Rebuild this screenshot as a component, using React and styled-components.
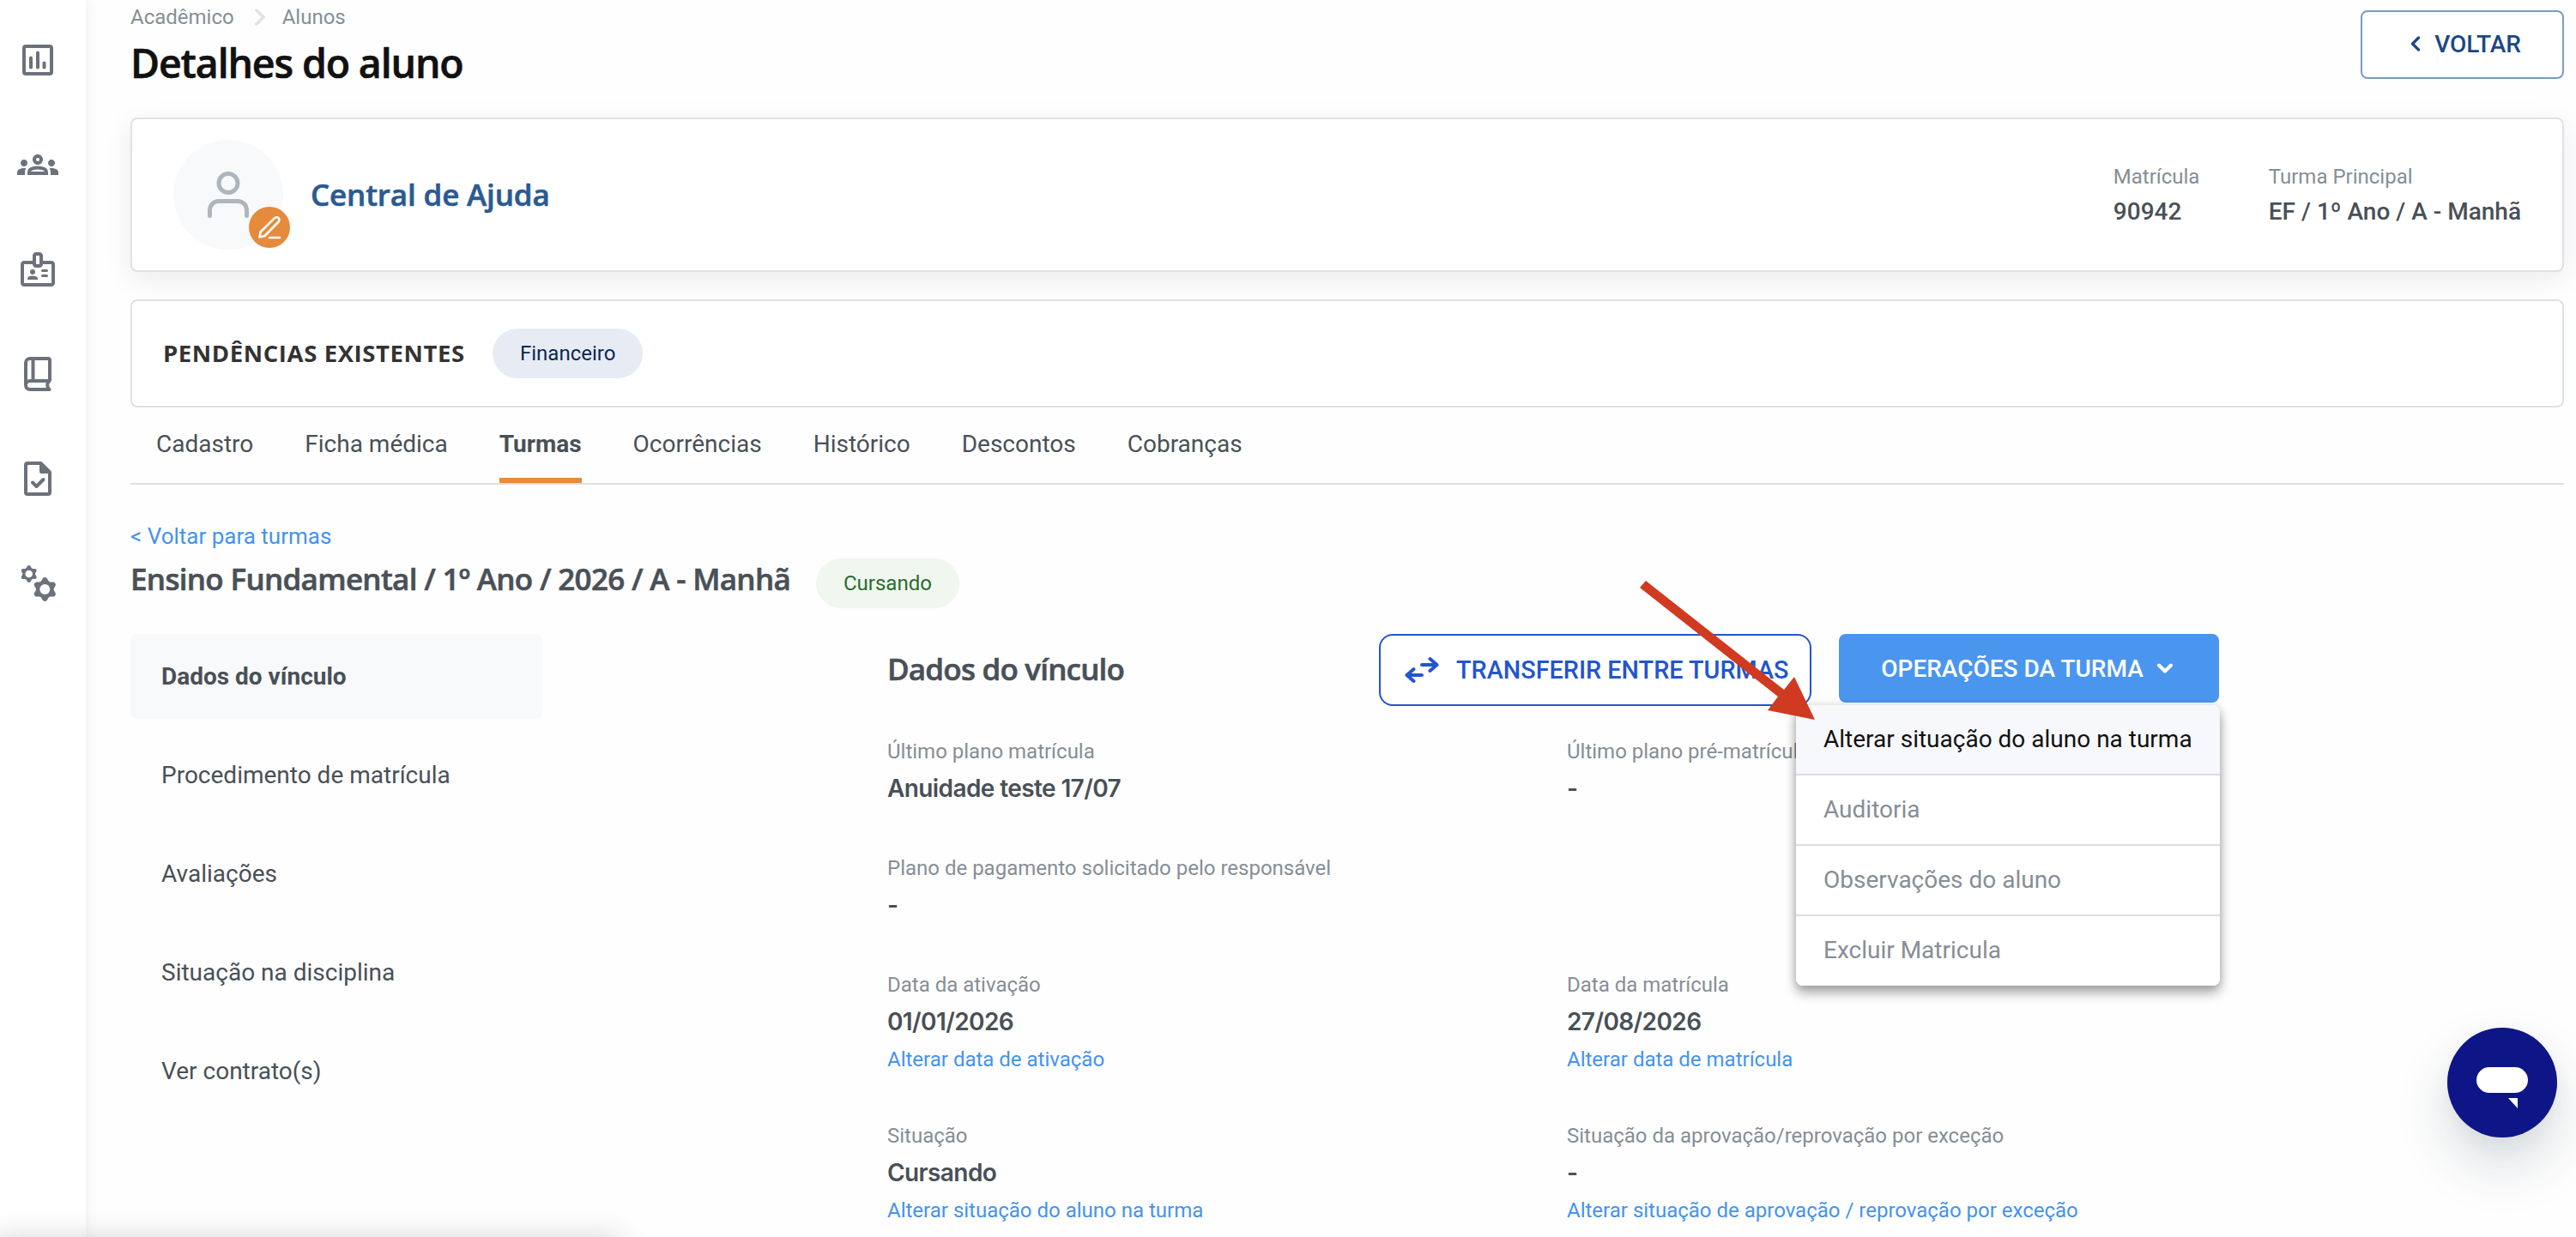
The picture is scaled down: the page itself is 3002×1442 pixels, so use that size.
import React from "react";
import styled, { createGlobalStyle, css } from "styled-components";

const Global = createGlobalStyle`
  *, *::before, *::after { box-sizing: border-box; }
  body { margin: 0; background: #fefefe; }
  body, button { font-family: Roboto, "Liberation Sans", sans-serif; }
  h1, h2, h3, p, ul, dl, dd { margin: 0; padding: 0; }
`;

const headingFont = css`
  font-family: "Open Sans", "Noto Sans", sans-serif;
  font-weight: 600;
  -webkit-text-stroke: 0.6px currentColor;
`;

const Page = styled.div`
  position: relative;
  display: flex;
  width: 3002px;
  height: 1442px;
  overflow: hidden;
  background: #fefefe;
`;

const Sidebar = styled.nav`
  display: flex;
  flex-direction: column;
  align-items: center;
  gap: 74px;
  flex: none;
  width: 100px;
  padding: 46px 12px 0 0;
  background: #fff;
  color: #6c727b;
  box-shadow: 0 0 14px rgba(0, 0, 0, 0.075);
`;

const SideIcon = styled.svg`
  display: block;
  flex: none;
  width: 48px;
  height: 48px;
`;

const Main = styled.main`
  display: flex;
  flex-direction: column;
  flex: none;
  width: 2888px;
  padding-left: 52px;
`;

const Header = styled.header`
  display: flex;
  justify-content: space-between;
  align-items: flex-start;
  height: 137px;
`;

const Breadcrumb = styled.div`
  display: flex;
  align-items: center;
  padding-top: 4px;
  font-size: 24px;
  line-height: 32px;
  color: #868e96;
`;

const Separator = styled.svg`
  width: 12px;
  height: 20px;
  margin: 0 20px 0 24px;
`;

const Title = styled.h1`
  ${headingFont}
  margin-top: 5px;
  font-size: 46.5px;
  line-height: 64px;
  letter-spacing: ${(p) => p.$track};
  color: #111;
`;

const BackButton = styled.button`
  display: flex;
  align-items: center;
  justify-content: flex-end;
  gap: 16px;
  width: 237px;
  height: 80px;
  margin-top: 12px;
  padding: 0 48px 2px 0;
  border: 2px solid #7c9bc1;
  border-radius: 8px;
  background: #fff;
  color: #1b4788;
  font-size: 28px;
  font-weight: 500;
`;

const Card = styled.section`
  display: flex;
  align-items: center;
  border: 2px solid #dee2e6;
  border-radius: 8px;
  background: #fff;
`;

const StudentCard = styled(Card)`
  height: 180px;
  padding: 0 48px 0 48px;
  box-shadow: 0 8px 32px rgba(0, 0, 0, 0.08);
`;

const Avatar = styled.div`
  position: relative;
  display: flex;
  align-items: center;
  justify-content: center;
  width: 128px;
  height: 128px;
  border-radius: 50%;
  background: #f8f9fb;
`;

const EditBadge = styled.span`
  position: absolute;
  right: -8px;
  bottom: 2px;
  display: flex;
  align-items: center;
  justify-content: center;
  width: 48px;
  height: 48px;
  border-radius: 50%;
  background: #e58b3b;
`;

const StudentName = styled.h2`
  ${headingFont}
  flex: 1;
  margin-left: 32px;
  font-size: 35px;
  line-height: 50px;
  letter-spacing: ${(p) => p.$track};
  color: #2a5a92;
`;

const Info = styled.div`
  width: ${(p) => p.$width};
  padding-top: 2px;
  white-space: nowrap;
`;

const Label = styled.div`
  font-size: 24px;
  line-height: 28px;
  color: #868e96;
`;

const InfoValue = styled.div`
  margin-top: 9px;
  font-size: 28px;
  font-weight: 500;
  line-height: 36px;
  color: #495057;
`;

const Value = styled.div`
  margin-top: 11px;
  font-family: Inter, Roboto, sans-serif;
  font-size: 28px;
  font-weight: 560;
  line-height: 36px;
  letter-spacing: -0.6px;
  color: #495057;
`;

const PendingCard = styled(Card)`
  height: 126px;
  margin-top: 32px;
  padding-left: 36px;
`;

const PendingTitle = styled.h3`
  ${headingFont}
  width: 384px;
  font-size: 27.5px;
  font-weight: 700;
  -webkit-text-stroke: 0;
  line-height: 40px;
  letter-spacing: ${(p) => p.$track};
  color: #333;
  white-space: nowrap;
`;

const Pill = styled.span`
  display: flex;
  align-items: center;
  height: 58px;
  padding: 0 32px 1px;
  border-radius: 29px;
  font-size: 24px;
  background: ${(p) => (p.$tone === "green" ? "#eff7ee" : "#e7ecf4")};
  color: ${(p) => (p.$tone === "green" ? "#2c6a2f" : "#0c2756")};
`;

const Tabs = styled.div`
  display: flex;
  gap: 60px;
  height: 90px;
  padding: 27px 0 0 30px;
  border-bottom: 2px solid #dee0e4;
`;

const Tab = styled.div`
  height: 61px;
  border-bottom: 6px solid ${(p) => (p.$active ? "#e58b3b" : "transparent")};
  font-size: 28px;
  font-weight: ${(p) => (p.$active ? 700 : 400)};
  line-height: 32px;
  color: #495057;
`;

const Link = styled.div`
  margin-top: ${(p) => p.$gap};
  font-size: ${(p) => p.$size || "24px"};
  line-height: ${(p) => p.$line || "28px"};
  color: #4593ee;
  white-space: nowrap;
`;

const ClassRow = styled.div`
  display: flex;
  align-items: center;
  height: 58px;
  margin-top: 10px;
`;

const SectionTitle = styled.h2`
  ${headingFont}
  width: ${(p) => p.$width};
  padding-bottom: ${(p) => p.$lift};
  font-size: 35px;
  line-height: 50px;
  letter-spacing: ${(p) => p.$track};
  color: #495057;
  white-space: nowrap;
`;

const Body = styled.div`
  display: flex;
  gap: 402px;
  margin-top: 30px;
`;

const SideMenu = styled.div`
  display: flex;
  flex-direction: column;
  gap: 16px;
  width: 480px;
`;

const SideMenuItem = styled.div`
  display: flex;
  align-items: center;
  height: 99px;
  padding: 0 36px 1px;
  border-radius: 8px;
  font-size: 28px;
  font-weight: ${(p) => (p.$active ? 700 : 400)};
  background: ${(p) => (p.$active ? "#f8f9fb" : "transparent")};
  color: #495057;
`;

const Content = styled.section`
  width: 1552px;
`;

const ContentHeader = styled.div`
  display: flex;
  align-items: center;
  height: 84px;
`;

const TransferButton = styled.button`
  display: flex;
  align-items: center;
  gap: 20px;
  width: 504px;
  height: 84px;
  padding: 0 0 1px 28px;
  border: 2px solid #2255cf;
  border-radius: 16px;
  background: #fff;
  color: #2255cf;
  font-size: 28.8px;
  font-weight: 500;
  white-space: nowrap;
`;

const Dropdown = styled.div`
  position: relative;
  align-self: flex-start;
  margin-left: 32px;
`;

const OperationsButton = styled.button`
  display: flex;
  align-items: center;
  justify-content: center;
  gap: 15px;
  width: 443px;
  height: 80px;
  padding: 0 4px 0 0;
  border: 0;
  border-radius: 8px;
  background: #4a96ef;
  color: #fff;
  font-size: 28px;
  font-weight: 500;
  white-space: nowrap;
`;

const Menu = styled.div`
  position: absolute;
  z-index: 2;
  top: 83px;
  right: -1px;
  width: 494px;
  border-radius: 8px;
  background: #fff;
  box-shadow: 0 8px 14px rgba(0, 0, 0, 0.36), 0 0 8px rgba(0, 0, 0, 0.12);
`;

const MenuItem = styled.div`
  display: flex;
  align-items: center;
  height: ${(p) => (p.$last ? "81px" : "82px")};
  padding: 0 32px 2px;
  border-bottom: ${(p) => (p.$last ? "0" : "2px solid #dcdddf")};
  border-radius: ${(p) => (p.$active ? "8px 8px 0 0" : p.$last ? "0 0 8px 8px" : "0")};
  font-size: 28px;
  background: ${(p) => (p.$active ? "#f7f8fb" : "#fff")};
  color: ${(p) => (p.$active ? "#111" : "#868e96")};
  white-space: nowrap;
`;

const Fields = styled.div`
  display: grid;
  grid-template-columns: 792px 1fr;
  grid-template-rows: 136px 136px 176px 132px;
  margin-top: 39px;
`;

const Field = styled.div`
  grid-column: ${(p) => p.$col};
  white-space: nowrap;
`;

const Pointer = styled.svg`
  position: absolute;
  z-index: 5;
  left: 1905px;
  top: 670px;
  width: 215px;
  height: 175px;
`;

const Chat = styled.div`
  position: absolute;
  z-index: 4;
  left: 2852px;
  top: 1198px;
  display: flex;
  width: 128px;
  height: 128px;
  border-radius: 50%;
  background: #0e1586;
  box-shadow: 0 32px 64px rgba(20, 50, 60, 0.16), 0 8px 24px rgba(20, 50, 60, 0.05);
`;

const StatusShade = styled.div`
  position: absolute;
  left: -10px;
  bottom: -44px;
  width: 734px;
  height: 40px;
  border-radius: 8px;
  box-shadow: 0 0 36px rgba(0, 0, 0, 0.2);
`;

const stroke = {
  fill: "none",
  stroke: "currentColor",
  strokeLinecap: "round",
  strokeLinejoin: "round",
};

function ReportIcon() {
  return (
    <SideIcon viewBox="0 0 48 48">
      <rect x="8" y="8" width="32" height="32" rx="2" {...stroke} strokeWidth="4" />
      <path d="M16 21.5v11M24 15.5v17M31.5 27.5v5" {...stroke} strokeWidth="4" />
    </SideIcon>
  );
}

function GroupsIcon() {
  return (
    <SideIcon viewBox="0 0 24 24" fill="currentColor">
      <path d="M4 13c1.1 0 2-.9 2-2s-.9-2-2-2-2 .9-2 2 .9 2 2 2zm1.13 1.1c-.37-.06-.74-.1-1.13-.1-.99 0-1.93.21-2.78.58A2.01 2.01 0 0 0 0 16.43V18h4.5v-1.61c0-.83.23-1.61.63-2.29zM20 13c1.1 0 2-.9 2-2s-.9-2-2-2-2 .9-2 2 .9 2 2 2zm4 3.43c0-.81-.48-1.53-1.22-1.85A6.95 6.95 0 0 0 20 14c-.39 0-.76.04-1.13.1.4.68.63 1.46.63 2.29V18H24v-1.57zm-7.76-2.78A10.4 10.4 0 0 0 12 12.75c-1.63 0-3.07.39-4.24.9A2.99 2.99 0 0 0 6 16.39V18h12v-1.61c0-1.18-.68-2.26-1.76-2.74zM8.07 16c.09-.23.13-.39.91-.69.97-.38 1.99-.56 3.02-.56s2.05.18 3.02.56c.77.3.81.46.91.69H8.07zM12 8c.55 0 1 .45 1 1s-.45 1-1 1-1-.45-1-1 .45-1 1-1m0-2c-1.66 0-3 1.34-3 3s1.34 3 3 3 3-1.34 3-3-1.34-3-3-3z" />
    </SideIcon>
  );
}

function BadgeIcon() {
  return (
    <SideIcon viewBox="0 0 24 24" fill="currentColor">
      <path d="M20 7h-5V4c0-1.1-.9-2-2-2h-2c-1.1 0-2 .9-2 2v3H4c-1.1 0-2 .9-2 2v11c0 1.1.9 2 2 2h16c1.1 0 2-.9 2-2V9c0-1.1-.9-2-2-2zM11 4h2v5h-2V4zm9 16H4V9h5c0 1.1.9 2 2 2h2c1.1 0 2-.9 2-2h5v11z" />
      <circle cx="9" cy="13.5" r="1.5" />
      <path d="M11.08 16.18C10.44 15.9 9.74 15.75 9 15.75s-1.44.15-2.08.43c-.56.23-.92.78-.92 1.39V18h6v-.43c0-.61-.36-1.16-.92-1.39z" />
      <path d="M14.75 12.75h2.5M14.75 15.75h2.5" {...stroke} strokeWidth="1.5" />
    </SideIcon>
  );
}

function BookIcon() {
  return (
    <SideIcon viewBox="0 0 48 48">
      <path
        d="M38 31V8a2 2 0 0 0-2-2H15a5 5 0 0 0-5 5v26M18.500 6v25M37.500 32H15a5 5 0 0 0 0 10h22.500c-3-3-3-7 0-10z"
        {...stroke}
        strokeWidth="4"
      />
    </SideIcon>
  );
}

function TaskIcon() {
  return (
    <SideIcon viewBox="0 0 48 48">
      <path
        d="M27.500 6H12a2 2 0 0 0-2 2v32a2 2 0 0 0 2 2h24a2 2 0 0 0 2-2V16.500z"
        {...stroke}
        strokeWidth="4"
      />
      <path d="M26 5v11a2 2 0 0 0 2 2h11z" fill="currentColor" />
      <path d="M18 28.500l4.500 4.500 8-8" {...stroke} strokeWidth="4" />
    </SideIcon>
  );
}

function Gear({ x, y, s }) {
  const teeth = [0, 60, 120, 180, 240, 300];
  return (
    <g transform={`translate(${x} ${y}) scale(${s})`}>
      <circle r="8.200" fill="none" stroke="currentColor" strokeWidth="4.400" />
      {teeth.map((a) => (
        <path
          key={a}
          transform={`rotate(${a})`}
          d="M-5-8.500L-2.600-12.600Q-2-14 0-14T2.600-12.600L5-8.500z"
          fill="currentColor"
        />
      ))}
    </g>
  );
}

function GearsIcon() {
  return (
    <SideIcon viewBox="0 0 48 48">
      <Gear x={13.700} y={13} s={0.710} />
      <Gear x={32.300} y={31} s={1} />
    </SideIcon>
  );
}

const tabs = ["Cadastro", "Ficha médica", "Turmas", "Ocorrências", "Histórico", "Descontos", "Cobranças"];
const sections = ["Dados do vínculo", "Procedimento de matrícula", "Avaliações", "Situação na disciplina", "Ver contrato(s)"];
const operations = ["Alterar situação do aluno na turma", "Auditoria", "Observações do aluno", "Excluir Matricula"];
const fields = [
  { col: 1, label: "Último plano matrícula", value: "Anuidade teste 17/07" },
  { col: 2, label: "Último plano pré-matrícula", value: "-" },
  { col: 1, label: "Plano de pagamento solicitado pelo responsável", value: "-" },
  { col: 1, label: "Data da ativação", value: "01/01/2026", link: "Alterar data de ativação" },
  { col: 2, label: "Data da matrícula", value: "27/08/2026", link: "Alterar data de matrícula" },
  { col: 1, label: "Situação", value: "Cursando", link: "Alterar situação do aluno na turma" },
  {
    col: 2,
    label: "Situação da aprovação/reprovação por exceção",
    value: "-",
    link: "Alterar situação de aprovação / reprovação por exceção",
  },
];

export default function App() {
  return (
    <>
      <Global />
      <Page>
        <Sidebar>
          <ReportIcon />
          <GroupsIcon />
          <BadgeIcon />
          <BookIcon />
          <TaskIcon />
          <GearsIcon />
        </Sidebar>
        <Main>
          <Header>
            <div>
              <Breadcrumb>
                <span>Acadêmico</span>
                <Separator viewBox="0 0 12 20">
                  <path d="M2 2l8 8-8 8" fill="none" stroke="#dee2e6" strokeWidth="3.500" strokeLinecap="round" />
                </Separator>
                <span>Alunos</span>
              </Breadcrumb>
              <Title $track="-1.15px">Detalhes do aluno</Title>
            </div>
            <BackButton>
              <svg width="12" height="18" viewBox="0 0 12 18">
                <path d="M9.500 2L2.500 9l7 7" {...stroke} strokeWidth="3.200" />
              </svg>
              VOLTAR
            </BackButton>
          </Header>

          <StudentCard>
            <Avatar>
              <svg width="48" height="54" viewBox="0 0 48 54">
                <circle cx="24" cy="13.500" r="11" fill="none" stroke="#adb5bd" strokeWidth="5" />
                <path
                  d="M2.500 51.500V45a10.500 10.500 0 0 1 10.500-10.500h22A10.500 10.500 0 0 1 45.500 45v6.500"
                  fill="none"
                  stroke="#adb5bd"
                  strokeWidth="5"
                  strokeLinecap="round"
                />
              </svg>
              <EditBadge>
                <svg width="28" height="28" viewBox="0 0 28 28" fill="none" stroke="#fff" strokeWidth="2.600" strokeLinecap="round" strokeLinejoin="round">
                  <path d="M2.500 25.500l1-6L20 3.200a3.100 3.100 0 0 1 4.600 4.300L8.500 24z" />
                  <path d="M14 26h12" />
                </svg>
              </EditBadge>
            </Avatar>
            <StudentName $track="-0.15px">Central de Ajuda</StudentName>
            <Info $width="181px">
              <Label>Matrícula</Label>
              <InfoValue>90942</InfoValue>
            </Info>
            <Info>
              <Label>Turma Principal</Label>
              <InfoValue>EF / 1º Ano / A - Manhã</InfoValue>
            </Info>
          </StudentCard>

          <PendingCard>
            <PendingTitle $track="0.6px">PENDÊNCIAS EXISTENTES</PendingTitle>
            <Pill>Financeiro</Pill>
          </PendingCard>

          <Tabs>
            {tabs.map((t) => (
              <Tab key={t} $active={t === "Turmas"}>{t}</Tab>
            ))}
          </Tabs>

          <Link $gap="44px" $size="26px" $line="32px">&lt; Voltar para turmas</Link>
          <ClassRow>
            <SectionTitle $width="799px" $lift="11px" $track="-0.69px">
              Ensino Fundamental / 1º Ano / 2026 / A - Manhã
            </SectionTitle>
            <Pill $tone="green">Cursando</Pill>
          </ClassRow>

          <Body>
            <SideMenu>
              {sections.map((s, i) => (
                <SideMenuItem key={s} $active={i === 0}>{s}</SideMenuItem>
              ))}
            </SideMenu>
            <Content>
              <ContentHeader>
                <SectionTitle $width="573px" $lift="2px" $track="-0.8px">Dados do vínculo</SectionTitle>
                <TransferButton>
                  <svg width="40" height="32" viewBox="0 0 40 32" {...stroke} strokeWidth="4">
                    <path d="M20 10h17M29.500 3l8 7-8 7" />
                    <path d="M20 22H3M10.500 15l-8 7 8 7" />
                  </svg>
                  TRANSFERIR ENTRE TURMAS
                </TransferButton>
                <Dropdown>
                  <OperationsButton>
                    OPERAÇÕES DA TURMA
                    <svg width="20" height="12" viewBox="0 0 20 12" {...stroke} strokeWidth="4">
                      <path d="M3 2.500l7 7 7-7" />
                    </svg>
                  </OperationsButton>
                  <Menu>
                    {operations.map((o, i) => (
                      <MenuItem key={o} $active={i === 0} $last={i === operations.length - 1}>{o}</MenuItem>
                    ))}
                  </Menu>
                </Dropdown>
              </ContentHeader>
              <Fields>
                {fields.map((f) => (
                  <Field key={f.label} $col={f.col}>
                    <Label>{f.label}</Label>
                    <Value>{f.value}</Value>
                    {f.link && <Link $gap="12px">{f.link}</Link>}
                  </Field>
                ))}
              </Fields>
            </Content>
          </Body>
        </Main>
        <StatusShade />
        <Pointer viewBox="0 0 215 175">
          <path d="M13 7L174 134L186 119L210 169L155 158L167 142L6 15z" fill="#d03a20" />
        </Pointer>
        <Chat>
          <svg width="128" height="128" viewBox="0 0 128 128" fill="#fff">
            <rect x="34" y="46" width="60" height="30" rx="15" />
            <path d="M71 82h11v12z" />
          </svg>
        </Chat>
      </Page>
    </>
  );
}
